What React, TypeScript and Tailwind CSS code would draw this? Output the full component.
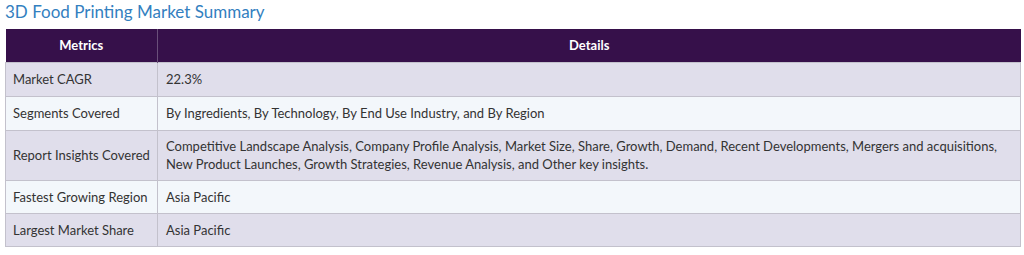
import React from "react";

const rows: [string, string, string][] = [
  ["Market CAGR", "22.3%", "h-[34px]"],
  ["Segments Covered", "By Ingredients, By Technology, By End Use Industry, and By Region", "h-[34px]"],
  [
    "Report Insights Covered",
    "Competitive Landscape Analysis, Company Profile Analysis, Market Size, Share, Growth, Demand, Recent Developments, Mergers and acquisitions, New Product Launches, Growth Strategies, Revenue Analysis, and Other key insights.",
    "h-[50px]",
  ],
  ["Fastest Growing Region", "Asia Pacific", "h-[33px]"],
  ["Largest Market Share", "Asia Pacific", "h-[33px]"],
];

export default function App() {
  return (
    <div className="w-[1024px] h-[255px] bg-white font-['Lato','Noto_Sans',sans-serif] text-[13px] text-[#333]">
      <h2 className="pl-[5px] h-[29px] text-[17px] leading-[24px] text-[#3380c0]">
        3D Food Printing Market Summary
      </h2>
      <table className="ml-[5px] w-[1016px] border-collapse">
        <thead>
          <tr className="h-[33px] bg-[#36104a] text-white font-bold">
            <th className="w-[152px] border-r border-[#6a4f7a] text-center font-bold">Metrics</th>
            <th className="text-center font-bold">Details</th>
          </tr>
        </thead>
        <tbody>
          {rows.map(([k, v, h], i) => (
            <tr key={k} className={(i % 2 === 0 ? "bg-[#e0deeb] " : "bg-[#f3f7fb] ") + h}>
              <td className="border border-[#c3c1cc] pl-[7px] pr-1 leading-[18px] align-middle">{k}</td>
              <td className="border border-[#c3c1cc] pl-[8px] pr-2 leading-[18px] align-middle">{v}</td>
            </tr>
          ))}
        </tbody>
      </table>
    </div>
  );
}
